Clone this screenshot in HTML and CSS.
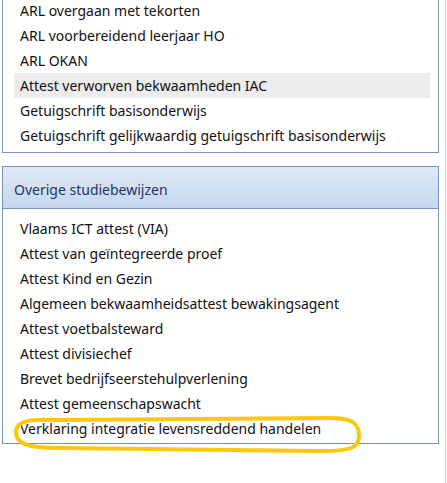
FILE: index.html
```html
<!DOCTYPE html>
<html>
<head>
    <title>Studiebewijzen</title>
    <link rel="stylesheet" href="styles.css">
</head>
<body>
    <div class="pane">
        <div class="group group-first">
            <ul class="group-list">
                <li>ARL overgaan met tekorten</li>
                <li>ARL voorbereidend leerjaar HO</li>
                <li>ARL OKAN</li>
                <li class="hover">Attest verworven bekwaamheden IAC</li>
                <li>Getuigschrift basisonderwijs</li>
                <li>Getuigschrift gelijkwaardig getuigschrift basisonderwijs</li>
            </ul>
        </div>

        <div class="group">
            <div class="group-header">Overige studiebewijzen</div>
            <ul class="group-list">
                <li>Vlaams ICT attest (VIA)</li>
                <li>Attest van geïntegreerde proef</li>
                <li>Attest Kind en Gezin</li>
                <li>Algemeen bekwaamheidsattest bewakingsagent</li>
                <li>Attest voetbalsteward</li>
                <li>Attest divisiechef</li>
                <li>Brevet bedrijfseerstehulpverlening</li>
                <li>Attest gemeenschapswacht</li>
                <li>Verklaring integratie levensreddend handelen</li>
            </ul>
        </div>
    </div>

    <!-- yellow marker drawn over the screenshot -->
    <svg class="marker" width="447" height="483" viewBox="0 0 447 483">
        <path d="M60 420 C32 419 16 420 16 432 C16 445 30 448 62 448 L320 451 C350 451 359 448 359 436 C359 423 352 418 330 418 Z"
              fill="none" stroke="#ffc70b" stroke-width="4" stroke-linejoin="round"/>
    </svg>
</body>
</html>
```

FILE: styles.css
```css
/* Reset */
* {
    margin: 0;
    padding: 0;
    box-sizing: border-box;
}

html, body {
    width: 100%;
    height: 100%;
    overflow: hidden;
    background-color: #ffffff;
    font-family: 'Noto Sans', 'Open Sans', sans-serif;
    font-size: 14px;
    color: #111111;
}

body {
    position: relative;
}

/* Outer pane with the light splitter line on the right */
.pane {
    display: flow-root;
    width: 446px;
    height: 100%;
    border-right: 1px solid #cdd5e1;
    padding-left: 2px;
}

.group {
    width: 437px;
    border: 1px solid #7393c0;
    background: #ffffff;
    margin-top: 13px;
}

/* first group is scrolled: its top edge is out of view */
.group-first {
    margin-top: -7px;
}

.group-header {
    height: 42px;
    padding: 3px 0 0 11px;
    display: flex;
    align-items: center;
    background: linear-gradient(to bottom, #e0eaf7, #c3d7ef);
    border-bottom: 1px solid #7393c0;
    color: #1c3563;
}

.group-list {
    list-style: none;
    padding: 7px 8px 2px 11px;
}

.group-first .group-list {
    padding-top: 4px;
    padding-bottom: 4px;
}

.group-list li {
    height: 25px;
    line-height: 25px;
    padding-left: 6px;
    white-space: nowrap;
}

.group-list li.hover {
    background-color: #ececec;
}

.marker {
    position: absolute;
    left: 0;
    top: 0;
    pointer-events: none;
}
```
